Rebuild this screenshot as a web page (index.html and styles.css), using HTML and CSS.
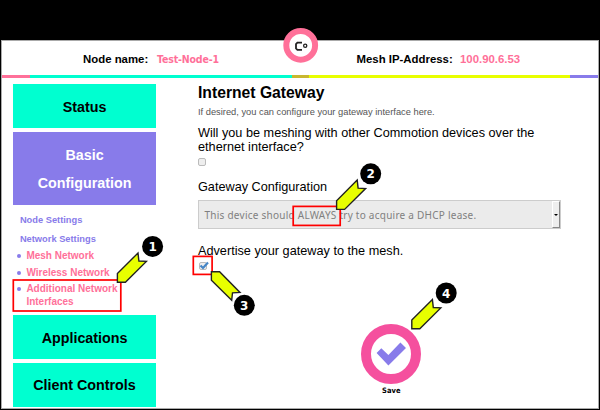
FILE: index.html
```html
<!DOCTYPE html>
<html lang="en">
<head>
<meta charset="utf-8">
<title>Internet Gateway</title>
<link rel="stylesheet" href="styles.css">
</head>
<body>
<div class="window">
  <header class="header">
    <div class="field node"><span class="label">Node name:</span><span class="value node-value">Test-Node-1</span></div>
    <div class="field mesh"><span class="label">Mesh IP-Address:</span><span class="value">100.90.6.53</span></div>
  </header>
  <div class="stripe"><i class="pink"></i><i class="mint"></i><i class="olive"></i><i class="lime"></i><i class="violet"></i></div>
  <div class="body">
    <nav class="sidebar">
      <a class="button">Status</a>
      <a class="button active">Basic<br>Configuration</a>
      <div class="submenu">
        <div class="section">Node Settings</div>
        <div class="section">Network Settings</div>
        <ul>
          <li>Mesh Network</li>
          <li>Wireless Network</li>
          <li class="long">Additional Network<br>Interfaces</li>
        </ul>
      </div>
      <a class="button">Applications</a>
      <a class="button">Client Controls</a>
    </nav>
    <main class="content">
      <h1>Internet Gateway</h1>
      <p class="hint">If desired, you can configure your gateway interface here.</p>
      <p class="question">Will you be meshing with other Commotion devices over the<br>ethernet interface?</p>
      <span class="checkbox"></span>
      <p class="question config">Gateway Configuration</p>
      <div class="select"><span class="option">This device should ALWAYS try to acquire a DHCP lease.</span><span class="arrow"></span></div>
      <p class="question advertise">Advertise your gateway to the mesh.</p>
      <span class="checkbox checked"><svg viewBox="0 0 10 9"><path d="M1.5 4.5 L4 7 L9 1.5" fill="none" stroke="#4686c6" stroke-width="2.2"/></svg></span>
      <div class="save">
        <svg viewBox="0 0 60 60"><circle cx="30" cy="30" r="25" fill="#fff" stroke="#f5509e" stroke-width="10"/><path d="M15.6 29 L20.3 24.3 L27.4 31 L39.4 18.5 L45 24 L27.4 41.5Z" fill="#887bea"/></svg>
        <span>Save</span>
      </div>
    </main>
  </div>
</div>
<svg class="overlay" viewBox="0 0 600 410">
  <circle cx="300.7" cy="45.3" r="14.4" fill="#fff" stroke="#ff7099" stroke-width="6"/>
  <path d="M302 42.6H297.4L296 44V48.4L297.4 49.8H302" fill="none" stroke="#222" stroke-width="1.8"/>
  <circle cx="305.2" cy="45.8" r="1.6" fill="none" stroke="#222" stroke-width="1.3"/>
  <g class="frames"><rect x="13.3" y="280" width="107.5" height="31"/><rect x="293.2" y="206.4" width="47" height="19"/><rect x="193.3" y="256.4" width="18.8" height="18"/></g>
  <g class="pointers">
    <path d="M117.4 282.3V273.6L138 253L138.9 261L146.4 261.4L125.4 282.3Z"/>
    <path d="M336.6 209.4V200.7L357.2 180.1L358.1 188.1L365.6 188.5L344.6 209.4Z"/>
    <path d="M411.8 328.8V320.1L432.4 299.5L433.3 307.5L440.8 307.9L419.8 328.8Z"/>
    <path d="M211.4 271.7H219.6L240 292.4L232.5 292.8L231.7 300.3L211.4 280.2Z"/>
  </g>
  <g class="badges">
    <circle cx="152.6" cy="246.4" r="10.5"/><text x="152.6" y="250.9">1</text>
    <circle cx="370.7" cy="173.8" r="10.5"/><text x="370.7" y="178.3">2</text>
    <circle cx="244.3" cy="305.3" r="10.5"/><text x="244.3" y="309.8">3</text>
    <circle cx="446.2" cy="293" r="10.5"/><text x="446.2" y="297.5">4</text>
  </g>
</svg>
</body>
</html>
```
FILE: styles.css
```css
* { box-sizing: border-box; margin: 0; padding: 0; }
body { width: 600px; height: 410px; overflow: hidden; background: #000; padding: 40px 1px 0 1px; font-family: "Liberation Sans", Arial, sans-serif; color: #000; }
.window { height: 368.5px; background: #fff; border: 1px solid #aaa; overflow: hidden; }
.header { height: 34px; display: flex; font-weight: bold; font-size: 11.4px; line-height: 14px; padding-top: 11px; }
.field { display: flex; white-space: nowrap; }
.node { padding-left: 81px; width: 354.5px; }
.label { width: 74px; }
.mesh .label { width: 103.5px; }
.value { color: #ff7099; }
.node-value { font-family: "DejaVu Sans Condensed", "DejaVu Sans", sans-serif; font-stretch: condensed; font-size: 10.5px; letter-spacing: -0.15px; }
.stripe { height: 3px; display: grid; grid-template-columns: 28px 262px 17px 261px 1fr; }
.pink { background: #ff7099; }
.mint { background: #00ffd0; }
.olive { background: #c9b72f; }
.lime { background: #e8ff00; }
.violet { background: #887bea; }
.body { display: flex; }
.sidebar { width: 184px; padding: 6px 0 0 11.4px; }
.button { display: flex; align-items: center; justify-content: center; text-align: center; width: 142.3px; height: 44px; margin-bottom: 3.5px; padding-top: 2px; background: #00ffd0; font-weight: bold; font-size: 14.3px; line-height: 28.5px; }
.button.active { height: 73px; background: #887bea; color: #fff; margin-bottom: 0; }
.submenu { height: 110.5px; padding: 9.5px 0 0 6.5px; font-weight: bold; font-size: 9.3px; color: #887bea; white-space: nowrap; }
.section { height: 19px; line-height: 13px; }
ul { list-style: none; font-size: 10px; color: #ff7099; margin-top: -3px; }
li { position: relative; padding-left: 6.5px; height: 16.5px; line-height: 13px; }
li::before { content: ""; position: absolute; left: -3px; top: 5px; width: 4px; height: 4px; border-radius: 50%; background: #887bea; }
.content { padding-top: 5px; width: 400px; padding-left: 12px; }
h1 { font-size: 15.7px; line-height: 20px; height: 22px; white-space: nowrap; }
.hint { font-size: 9.3px; line-height: 14px; height: 21px; color: #555; }
.question { font-size: 12.7px; line-height: 14px; white-space: nowrap; }
.checkbox { display: block; width: 8px; height: 8px; margin-top: 4px; border: 1px solid #bbb; border-radius: 2px; background: #eee; }
.checked svg { display: block; width: 10px; height: 9px; margin: -2px 0 0 -1px; }
.config { margin-top: 14px; height: 20px; }
.select { display: flex; justify-content: space-between; height: 29px; width: 363px; border: 1px solid #ccc; background: #ebebeb; }
.option { padding-left: 5.5px; line-height: 29px; font-family: "Noto Sans", sans-serif; font-size: 10px; letter-spacing: 0.25px; color: #808080; white-space: nowrap; }
.arrow { width: 8px; border: 1px solid #fff; border-right-color: #888; border-bottom-color: #888; background: #eee; display: flex; align-items: center; justify-content: center; }
.arrow::before { content: ""; border: 2px solid transparent; border-top-color: #000; border-bottom: 0; }
.advertise { margin-top: 15px; }
.checked { margin-top: 4px; margin-left: 1px; }
.save { margin: 54px 0 0 163.3px; width: 60px; text-align: center; font: bold 7.5px/13px "DejaVu Sans Condensed", "DejaVu Sans", sans-serif; font-stretch: condensed; }
.save svg { display: block; width: 60px; height: 60px; }
.overlay { position: absolute; left: 0; top: 0; width: 600px; height: 410px; }
.frames rect { fill: none; stroke: #f00; stroke-width: 1.7px; }
.pointers path { fill: #e8ff00; stroke: #222; stroke-width: 1.4px; }
.badges circle { fill: #000; }
.badges text { fill: #fff; font: bold 12px "DejaVu Sans", sans-serif; text-anchor: middle; }
```
